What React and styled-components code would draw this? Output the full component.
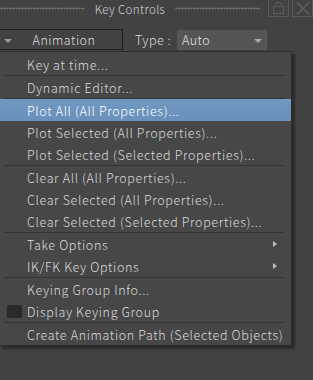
import React from 'react'
import styled, { createGlobalStyle } from 'styled-components'

const GlobalStyle = createGlobalStyle`
  html, body {
    margin: 0;
    padding: 0;
    background: #424242;
  }
  body {
    width: 313px;
    height: 380px;
    overflow: hidden;
    font-family: "Noto Sans CJK JP", "Noto Sans", sans-serif;
    font-weight: 300;
    color: #dedede;
  }
`

const Panel = styled.div`
  width: 313px;
  height: 380px;
  background: #424242;
  display: flex;
  flex-direction: column;
`

const TitleBar = styled.div`
  height: 19px;
  display: flex;
  align-items: center;
  gap: 4px;
`

const Dots = styled.div`
  flex: 1;
  height: 3px;
  margin-top: -3px;
  background-image: radial-gradient(circle, #777777 0.9px, transparent 1.2px);
  background-size: 3px 3px;
`

const Title = styled.div`
  font-size: 11.5px;
  color: #d4d4d4;
  letter-spacing: 0.4px;
  padding: 0 6px;
  margin-top: -2px;
`

const TitleButtons = styled.div`
  display: flex;
  gap: 3px;
  margin-left: 4px;
  align-self: flex-start;
`

const TitleButton = styled.div`
  width: 21px;
  height: 17px;
  border: 1px solid #5a5a5a;
  border-top: none;
  box-sizing: border-box;
  display: flex;
  align-items: center;
  justify-content: center;
`

const ToolRow = styled.div`
  height: 21px;
  margin-top: 10px;
  display: flex;
  align-items: center;
`

const ModeButton = styled.div`
  width: 124px;
  height: 21px;
  margin-left: -1px;
  box-sizing: border-box;
  border: 1px solid #1f1f1f;
  display: flex;
  align-items: center;
  font-size: 12.5px;
  letter-spacing: 0.5px;
  color: #dcdcdc;
`

const ModeLabel = styled.span`
  flex: 1;
  text-align: center;
  padding-right: 6px;
`

const ArrowDown = styled.span`
  width: 0;
  height: 0;
  border-left: 4px solid transparent;
  border-right: 4px solid transparent;
  border-top: 4px solid ${p => p.$color || '#9a9a9a'};
  margin: ${p => p.$margin || '0'};
`

const TypeLabel = styled.span`
  font-size: 12.5px;
  letter-spacing: 0.5px;
  margin-left: 12px;
  width: 42px;
  color: #dcdcdc;
`

const TypeSelect = styled.div`
  width: 90px;
  height: 20px;
  background: #555555;
  display: flex;
  align-items: center;
  justify-content: space-between;
  padding: 0 5px;
  box-sizing: border-box;
  font-size: 12.5px;
  letter-spacing: 0.5px;
  color: #e2e2e2;
`

const Menu = styled.div`
  width: 293px;
  margin-left: -1px;
  margin-top: 1px;
  box-sizing: border-box;
  background: #474747;
  border: 1px solid #2c2c2c;
  padding-top: 1px;
  box-shadow: 3px 3px 2px rgba(0, 0, 0, 0.35);
`

const Item = styled.div`
  height: 22px;
  display: flex;
  align-items: center;
  padding-left: 27px;
  padding-right: 14px;
  font-size: 12.5px;
  letter-spacing: 0.65px;
  color: ${p => (p.$active ? '#ffffff' : '#dadada')};
  background: ${p => (p.$active ? 'linear-gradient(#7098c2, #6890ba)' : 'transparent')};
  position: relative;
  white-space: nowrap;
`

const ItemText = styled.span`
  flex: 1;
`

const SubArrow = styled.span`
  width: 0;
  height: 0;
  border-top: 3px solid transparent;
  border-bottom: 3px solid transparent;
  border-left: 4px solid #bdbdbd;
`

const Check = styled.span`
  position: absolute;
  left: 7px;
  top: 5px;
  width: 15px;
  height: 13px;
  background: #2a2a2a;
  border-radius: 1px;
`

const Separator = styled.div`
  height: 1px;
  margin: 0 6px 0 4px;
  background: #353535;
`

const menu = [
  { label: 'Key at time...' },
  'sep',
  { label: 'Dynamic Editor...' },
  'sep',
  { label: 'Plot All (All Properties)...', active: true },
  { label: 'Plot Selected (All Properties)...' },
  { label: 'Plot Selected (Selected Properties)...' },
  'sep',
  { label: 'Clear All (All Properties)...' },
  { label: 'Clear Selected (All Properties)...' },
  { label: 'Clear Selected (Selected Properties)...' },
  'sep',
  { label: 'Take Options', sub: true },
  { label: 'IK/FK Key Options', sub: true },
  'sep',
  { label: 'Keying Group Info...' },
  { label: 'Display Keying Group', check: true },
  'sep',
  { label: 'Create Animation Path (Selected Objects)' },
]

const App = () => {
  return (
    <Panel>
      <GlobalStyle />
      <TitleBar>
        <Dots />
        <Title>Key Controls</Title>
        <Dots />
        <TitleButtons>
          <TitleButton>
            <svg width="13" height="12" viewBox="0 0 13 12">
              <rect x="1.5" y="4.5" width="10" height="7" fill="none" stroke="#5c5c5c" />
              <path d="M3.5 4.5 V2 Q3.5 0.5 6.5 0.5 Q9.5 0.5 9.5 2 V4.5" fill="none" stroke="#5c5c5c" />
            </svg>
          </TitleButton>
          <TitleButton>
            <svg width="14" height="13" viewBox="0 0 14 13">
              <path d="M1 0.5 L13 12.5 M13 0.5 L1 12.5" stroke="#626262" strokeWidth="1.3" />
            </svg>
          </TitleButton>
        </TitleButtons>
      </TitleBar>
      <ToolRow>
        <ModeButton>
          <ArrowDown $margin="3px 0 0 4px" />
          <ModeLabel>Animation</ModeLabel>
        </ModeButton>
        <TypeLabel>Type :</TypeLabel>
        <TypeSelect>
          <span>Auto</span>
          <ArrowDown $color="#a8a8a8" $margin="2px 0 0 0" />
        </TypeSelect>
      </ToolRow>
      <Menu>
        {menu.map((m, i) =>
          m === 'sep' ? (
            <Separator key={i} />
          ) : (
            <Item key={i} $active={m.active}>
              {m.check && <Check />}
              <ItemText>{m.label}</ItemText>
              {m.sub && <SubArrow />}
            </Item>
          )
        )}
      </Menu>
    </Panel>
  )
}

export default App
